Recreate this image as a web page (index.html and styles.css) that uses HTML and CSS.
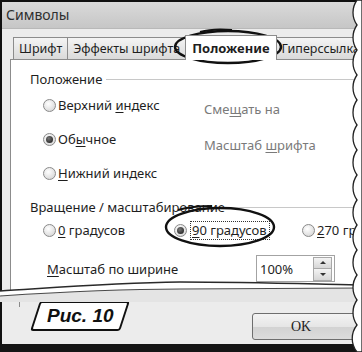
FILE: index.html
```html
<!DOCTYPE html>
<html lang="ru">
<head>
	<meta charset="UTF-8">
	<title>Символы</title>
	<link rel="stylesheet" href="styles.css">
</head>
<body>

	<div class="shot">
		<div class="dialog">
			<div class="titlebar">Символы</div>

			<div class="dlg-body">
				<div class="tabs">
					<div class="tab">Шрифт</div>
					<div class="tab">Эффекты шрифта</div>
					<div class="tab tab-active">Положение</div>
					<div class="tab">Гиперссылка</div>
				</div>

				<div class="panel">
					<div class="group-title"><span>Положение</span></div>
					<div class="pos-grid">
						<div class="pos-col">
							<label class="radio-row"><span class="radio"></span><span>Верхний <u>и</u>ндекс</span></label>
							<label class="radio-row"><span class="radio radio-on"></span><span>Об<u>ы</u>чное</span></label>
							<label class="radio-row"><span class="radio"></span><span><u>Н</u>ижний индекс</span></label>
						</div>
						<div class="pos-col pos-col-off">
							<div class="muted">Сме<u>щ</u>ать на</div>
							<div class="muted">Масштаб <u>ш</u>рифта</div>
						</div>
					</div>

					<div class="group-title group-title-2"><span>Вращение / масштабирование</span></div>
					<div class="rot-row">
						<label class="rot-item rot-0"><span class="radio"></span><span><u>0</u> градусов</span></label>
						<label class="rot-item rot-90"><span class="radio radio-on"></span><span class="focus"><u>9</u>0 градусов</span></label>
						<label class="rot-item"><span class="radio"></span><span><u>2</u>70 градусов</span></label>
					</div>

					<div class="scale-row">
						<span class="scale-label"><u>М</u>асштаб по ширине</span>
						<div class="spin">
							<span class="spin-value">100%</span>
							<div class="spin-btns">
								<span class="spin-btn"><i class="arr-up"></i></span>
								<span class="spin-btn"><i class="arr-down"></i></span>
							</div>
						</div>
					</div>
				</div>

				<div class="footer">
					<div class="footer-tick"></div>
					<div class="caption"><span>Рис. 10</span></div>
					<div class="btn-ok">OK</div>
				</div>
			</div>
		</div>

		<div class="bottom-band"></div>

		<svg class="marks" width="362" height="352" viewBox="0 0 362 352">
			<!-- torn bottom of the tab panel -->
			<path d="M0,296 C60,292 110,289 180,289 C250,289 310,288 362,288 L362,302 L0,302 Z" fill="#e4e4e4"/>
			<path d="M0,291 C50,288 110,283 180,282 C250,282 310,284 362,285 L362,288 C310,288 250,289 180,289 C110,289 60,292 0,296 Z" fill="#fff"/>
			<path d="M0,291 C50,288 110,283 180,282 C250,282 310,284 362,285" fill="none" stroke="#2a2a2a" stroke-width="1.6"/>
			<path d="M0,296 C60,292 110,289 180,289 C250,289 310,288 362,288" fill="none" stroke="#4a4a4a" stroke-width="1.2"/>

			<!-- torn right edge -->
			<path d="M357,0 A21.5 21.5 0 0 0 357 25 A21.5 21.5 0 0 0 357 50 A21.5 21.5 0 0 0 357 75 A21.5 21.5 0 0 0 357 100 A21.5 21.5 0 0 0 357 125 A21.5 21.5 0 0 0 357 150 A21.5 21.5 0 0 0 357 175 A21.5 21.5 0 0 0 357 200 A21.5 21.5 0 0 0 357 225 A21.5 21.5 0 0 0 357 250 A21.5 21.5 0 0 0 357 275 A21.5 21.5 0 0 0 357 300 A21.5 21.5 0 0 0 357 325 A21.5 21.5 0 0 0 357 352 L362,352 L362,0 Z" fill="#fff" stroke="#222" stroke-width="1.3"/>

			<!-- hand drawn marks -->
			<ellipse cx="228" cy="47" rx="53" ry="16" fill="none" stroke="#111" stroke-width="2.4"/>
			<path d="M200,32 C210,29 222,29 232,30" fill="none" stroke="#111" stroke-width="2"/>
			<ellipse cx="220" cy="227" rx="54" ry="19" fill="none" stroke="#111" stroke-width="2.4"/>
			<path d="M178,210 C188,207 200,206 212,206" fill="none" stroke="#111" stroke-width="2"/>
		</svg>
	</div>

</body>
</html>
```

FILE: styles.css
```css
body {
	margin: 0;
	background: #fff;
	font-family: "Noto Sans", "Open Sans", sans-serif;
	font-size: 13px;
	color: #1e1e1e;
}
u {
	text-decoration: underline;
	text-underline-offset: 2px;
}
.shot {
	position: relative;
	width: 362px;
	height: 352px;
	overflow: hidden;
}
.dialog {
	width: 362px;
	height: 344px;
	border-top: 2px solid #111;
	border-left: 2px solid #111;
	box-sizing: border-box;
	background: #e9e9e9;
	display: flex;
	flex-direction: column;
}
.titlebar {
	height: 26px;
	line-height: 26px;
	padding-left: 4px;
	font-size: 14px;
	color: #2e2e2e;
	background: linear-gradient(#dadada, #c6c6c6);
	border-bottom: 1px solid #b8b8b8;
}
.dlg-body {
	flex: 1;
	display: flex;
	flex-direction: column;
	padding: 5px 0 0 8px;
	background: #ececec;
}

/* tabs */
.tabs {
	display: flex;
	align-items: flex-end;
	height: 25px;
	padding-left: 3px;
}
.tab {
	flex: none;
	height: 21px;
	line-height: 21px;
	padding: 0 5px;
	border: 1px solid #8c8c8c;
	border-bottom: none;
	background: linear-gradient(#f4f4f4, #dadada);
	color: #1e1e1e;
	font-size: 12.5px;
	white-space: nowrap;
	margin-right: -1px;
}
.tab-active {
	height: 24px;
	line-height: 24px;
	background: #fff;
	font-weight: bold;
	font-size: 13px;
	position: relative;
	z-index: 1;
	margin-bottom: -1px;
	padding: 0 6px;
}

/* panel */
.panel {
	height: 234px;
	background: #fff;
	border-left: 1px solid #8c8c8c;
	border-top: 1px solid #8c8c8c;
	box-sizing: border-box;
	padding-top: 10px;
}
.group-title {
	display: flex;
	align-items: center;
	height: 18px;
	padding-left: 19px;
	color: #1e1e1e;
}
.group-title::after {
	content: "";
	flex: 1;
	height: 1px;
	margin-left: 4px;
	background: #c8c8c8;
}
.group-title-2 {
	margin-top: 8px;
}
.pos-grid {
	display: flex;
}
.pos-col {
	flex: none;
	display: flex;
	flex-direction: column;
	width: 161px;
	padding-left: 32px;
}
.pos-col-off {
	padding-left: 0;
	padding-top: 4px;
}
.radio-row {
	display: flex;
	align-items: center;
	height: 34px;
	white-space: nowrap;
}
.muted {
	height: 36px;
	line-height: 34px;
	color: #7a7a7a;
	white-space: nowrap;
}
.radio {
	width: 11px;
	height: 11px;
	border-radius: 50%;
	border: 1px solid #8a8a8a;
	background: radial-gradient(circle at 40% 35%, #fff, #cfcfcf);
	margin-right: 2px;
	flex: none;
	position: relative;
}
.radio-on::after {
	content: "";
	position: absolute;
	left: 2px;
	top: 2px;
	width: 7px;
	height: 7px;
	border-radius: 50%;
	background: radial-gradient(circle at 40% 35%, #777, #111);
}
.rot-row {
	display: flex;
	align-items: center;
	height: 22px;
	margin-top: 3px;
	padding-left: 32px;
}
.rot-item {
	flex: none;
	display: flex;
	align-items: center;
	white-space: nowrap;
}
.rot-0 {
	width: 131px;
}
.rot-90 {
	width: 128px;
}
.focus {
	outline: 1px dotted #333;
	padding: 0 2px 0 1px;
	margin-left: 2px;
	line-height: 17px;
}
.scale-row {
	display: flex;
	align-items: center;
	height: 27px;
	margin-top: 14px;
	padding-left: 36px;
}
.scale-label {
	flex: none;
	width: 209px;
}
.spin {
	flex: none;
	display: flex;
	align-items: center;
	justify-content: space-between;
	width: 79px;
	height: 27px;
	box-sizing: border-box;
	border: 1px solid #a3a3a3;
	padding: 1px 2px 1px 3px;
	background: #fff;
}
.spin-value {
	color: #1e1e1e;
}
.spin-btns {
	display: flex;
	flex-direction: column;
	width: 17px;
	height: 22px;
	border: 1px solid #a8a8a8;
}
.spin-btn {
	flex: 1;
	display: flex;
	align-items: center;
	justify-content: center;
	background: linear-gradient(#f4f4f4, #d6d6d6);
}
.spin-btn + .spin-btn {
	border-top: 1px solid #a8a8a8;
}
.arr-up,
.arr-down {
	width: 0;
	height: 0;
	border-left: 3px solid transparent;
	border-right: 3px solid transparent;
}
.arr-up {
	border-bottom: 3px solid #333;
}
.arr-down {
	border-top: 3px solid #333;
}

/* footer */
.footer {
	flex: 1;
	display: flex;
	align-items: flex-start;
}
.footer-tick {
	flex: none;
	width: 1px;
	height: 14px;
	background: #8a8a8a;
	margin-left: 9px;
}
.caption {
	flex: none;
	margin: 8px 0 0 15px;
	width: 86px;
	height: 26px;
	border: 2px solid #111;
	border-radius: 3px;
	background: #fff;
	transform: skewX(-18deg);
	display: flex;
	align-items: center;
	justify-content: center;
}
.caption span {
	transform: skewX(18deg);
	font-family: "Liberation Sans", Arial, sans-serif;
	font-weight: bold;
	font-style: italic;
	font-size: 19px;
	color: #111;
}
.btn-ok {
	flex: none;
	margin: 20px 0 0 127px;
	width: 110px;
	height: 27px;
	line-height: 25px;
	box-sizing: border-box;
	border: 1px solid #6e6e6e;
	border-radius: 3px;
	background: linear-gradient(#f3f3f3 0%, #e6e6e6 50%, #d2d2d2 51%, #dcdcdc 100%);
	font-family: "Liberation Serif", serif;
	font-size: 14px;
	color: #1e1e1e;
	padding-left: 38px;
}

.bottom-band {
	height: 8px;
	background: #151515;
}
.marks {
	position: absolute;
	left: 0;
	top: 0;
	pointer-events: none;
}
```
